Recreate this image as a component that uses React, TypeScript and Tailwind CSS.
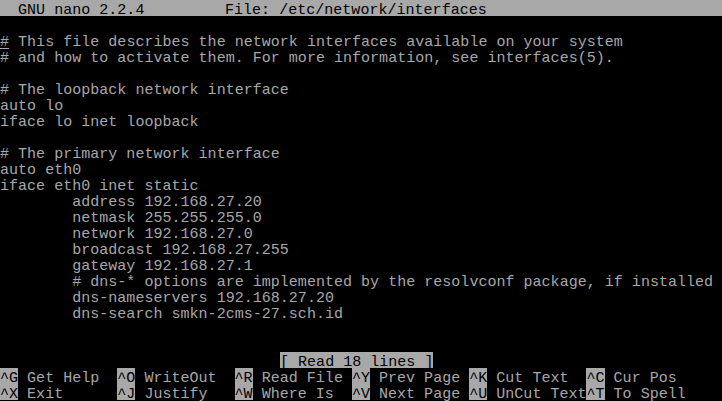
import React from 'react';

const bodyLines: string[] = [
  '',
  '__CURSOR__ This file describes the network interfaces available on your system',
  '# and how to activate them. For more information, see interfaces(5).',
  '',
  '# The loopback network interface',
  'auto lo',
  'iface lo inet loopback',
  '',
  '# The primary network interface',
  'auto eth0',
  'iface eth0 inet static',
  '        address 192.168.27.20',
  '        netmask 255.255.255.0',
  '        network 192.168.27.0',
  '        broadcast 192.168.27.255',
  '        gateway 192.168.27.1',
  '        # dns-* options are implemented by the resolvconf package, if installed',
  '        dns-nameservers 192.168.27.20',
  '        dns-search smkn-2cms-27.sch.id',
  '',
  '',
];

const shortcuts: [string, string][][] = [
  [
    ['^G', 'Get Help'],
    ['^O', 'WriteOut'],
    ['^R', 'Read File'],
    ['^Y', 'Prev Page'],
    ['^K', 'Cut Text'],
    ['^C', 'Cur Pos'],
  ],
  [
    ['^X', 'Exit'],
    ['^J', 'Justify'],
    ['^W', 'Where Is'],
    ['^V', 'Next Page'],
    ['^U', 'UnCut Text'],
    ['^T', 'To Spell'],
  ],
];

// one terminal row = 16px
const Row = ({ children, className = '' }: { children?: React.ReactNode; className?: string }) => (
  <div className={`h-[16px] whitespace-pre flex ${className}`}>{children}</div>
);

// text cell: glyphs sit low in the cell like the console font
const Cell = ({ children, className = '' }: { children?: React.ReactNode; className?: string }) => (
  <span className={`h-[16px] pt-[6px] leading-[10px] ${className}`}>{children}</span>
);

const App = () => {
  return (
    <div
      className="w-[722px] h-[401px] bg-black text-[#a8a8a8] text-[15px] tracking-[0.025px] overflow-hidden"
      style={{ fontFamily: '"Liberation Mono", "DejaVu Sans Mono", monospace' }}
    >
      {/* title bar */}
      <Row className="bg-[#a8a8a8] text-black">
        <Cell className="w-[225px]">{'  GNU nano 2.2.4'}</Cell>
        <Cell>File: /etc/network/interfaces</Cell>
      </Row>

      {bodyLines.map((line, i) =>
        line.startsWith('__CURSOR__') ? (
          <Row key={i}>
            <Cell className="underline underline-offset-[2px]">#</Cell>
            <Cell>{line.replace('__CURSOR__', '')}</Cell>
          </Row>
        ) : (
          <Row key={i}>
            <Cell>{line}</Cell>
          </Row>
        )
      )}

      {/* status line */}
      <Row>
        <span className="w-[280px]"></span>
        <Cell className="bg-[#a8a8a8] text-black">[ Read 18 lines ]</Cell>
      </Row>

      {shortcuts.map((row, r) => (
        <Row key={r}>
          {row.map(([key, label], i) => (
            <div key={i} className={`flex ${i < 5 ? 'w-[117.3px] shrink-0' : ''}`}>
              <Cell className="bg-[#a8a8a8] text-black">{key}</Cell>
              <Cell>{' ' + label}</Cell>
            </div>
          ))}
        </Row>
      ))}
    </div>
  );
};

export default App;
